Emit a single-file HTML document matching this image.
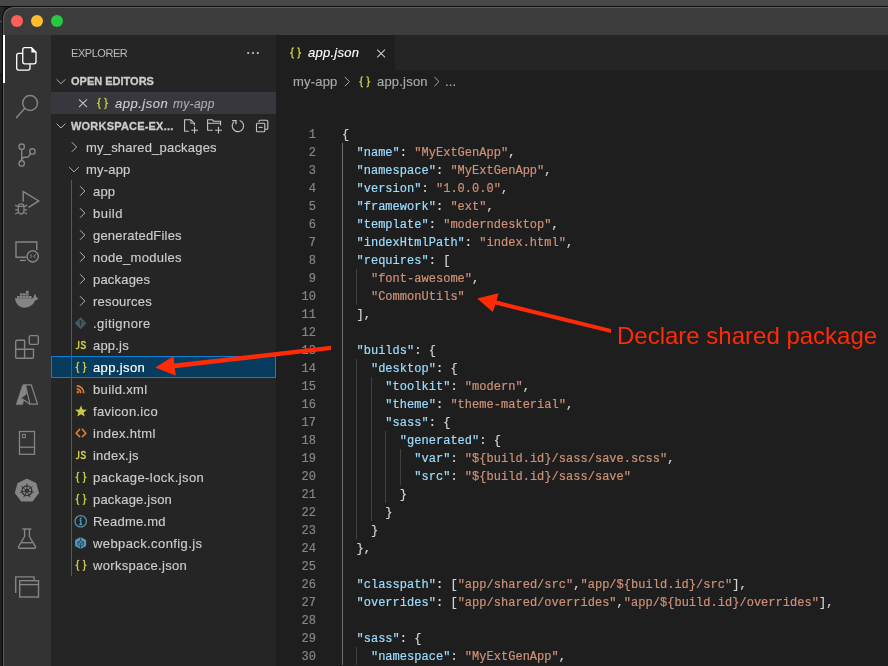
<!DOCTYPE html>
<html><head><meta charset="utf-8"><style>
*{box-sizing:border-box}
html,body{margin:0;padding:0}
body{width:888px;height:666px;overflow:hidden;position:relative;background:#1c1c1c;font-family:"Liberation Sans",sans-serif}
div,span.a,svg{position:absolute}
.t{-webkit-text-stroke:0.15px;white-space:pre;line-height:22px;height:22px;font-size:13px;color:#cccccc;letter-spacing:0.2px}
.hd{-webkit-text-stroke:0.3px;white-space:pre;font-size:11px;font-weight:bold;color:#cccccc;line-height:22px;height:22px}
.cl{-webkit-text-stroke:0.2px;letter-spacing:0.024px;left:342px;font-family:"Liberation Mono",monospace;font-size:12px;line-height:18px;height:18px;white-space:pre;color:#d4d4d4}
.ln{-webkit-text-stroke:0.2px;left:276px;width:40px;text-align:right;font-family:"Liberation Mono",monospace;font-size:12px;line-height:18px;height:18px;color:#858585}
.t,.hd,.cl,.ln{will-change:transform}
.k{color:#9cdcfe}.s{color:#ce9178}
.ig{width:1px;background:#404040}
</style></head><body>
<div style="left:0;top:0;width:888px;height:6px;background:#474747"></div>
<div style="left:0;top:6px;width:888px;height:1px;background:#0d0d0d"></div>
<div style="left:0;top:7px;width:4px;height:67px;background:#262626"></div>
<div style="left:0;top:74px;width:4px;height:1px;background:#0f0f0f"></div>
<div style="left:0;top:75px;width:4px;height:591px;background:#1d1d1d"></div>
<div style="left:0;top:21px;width:3px;height:1px;background:#555"></div>
<div style="left:2px;top:6px;width:886px;height:29px;background:#3c3c3c;border-top-left-radius:11px;border-top:1px solid #0d0d0d;border-left:1px solid #0d0d0d;box-shadow:inset 1px 1px 0 #5c5c5c"></div>
<div style="left:11px;top:15px;width:12px;height:12px;border-radius:50%;background:#fe5f57"></div>
<div style="left:31px;top:15px;width:12px;height:12px;border-radius:50%;background:#febc2e"></div>
<div style="left:51px;top:15px;width:12px;height:12px;border-radius:50%;background:#28c840"></div>
<div style="left:2px;top:35px;width:49px;height:631px;background:#333333;border-left:1px solid #0d0d0d;box-shadow:inset 1px 0 0 #565656"></div>
<div style="left:3px;top:35px;width:2px;height:48px;background:#ffffff"></div>
<div style="left:51px;top:35px;width:225px;height:631px;background:#252526"></div>
<div style="left:276px;top:35px;width:612px;height:35px;background:#252526"></div>
<div style="left:276px;top:35px;width:119px;height:35px;background:#1e1e1e"></div>
<div style="left:276px;top:70px;width:612px;height:596px;background:#1e1e1e"></div>
<div style="will-change:transform;left:71px;top:43px;font-size:11px;color:#bbbbbb;line-height:20px;white-space:pre;letter-spacing:-0.45px">EXPLORER</div>
<div class="hd" style="left:71px;top:70px">OPEN EDITORS</div>
<div style="left:51px;top:92px;width:225px;height:22px;background:#37373d"></div>
<div class="t" style="left:114.5px;top:93px;font-style:italic;letter-spacing:0.5px">app.json</div>
<div class="t" style="left:173px;top:93px;font-style:italic;font-size:12px;color:#a9a9a9;letter-spacing:0.3px">my-app</div>
<div class="hd" style="left:71px;top:115px;letter-spacing:0.2px">WORKSPACE-EX...</div>
<div class="t" style="left:85.6px;top:137px;color:#cccccc;letter-spacing:0.20px">my_shared_packages</div>
<div class="t" style="left:85.6px;top:159px;color:#cccccc;letter-spacing:0.20px">my-app</div>
<div class="t" style="left:93px;top:181px;color:#cccccc;letter-spacing:0.20px">app</div>
<div class="t" style="left:93px;top:203px;color:#cccccc;letter-spacing:0.50px">build</div>
<div class="t" style="left:93px;top:225px;color:#cccccc;letter-spacing:0.20px">generatedFiles</div>
<div class="t" style="left:93px;top:247px;color:#cccccc;letter-spacing:0.29px">node_modules</div>
<div class="t" style="left:93px;top:269px;color:#cccccc;letter-spacing:0.20px">packages</div>
<div class="t" style="left:93px;top:291px;color:#cccccc;letter-spacing:0.20px">resources</div>
<div class="t" style="left:93px;top:313px;color:#cccccc;letter-spacing:0.42px">.gitignore</div>
<div class="t" style="left:93px;top:335px;color:#cccccc;letter-spacing:0.20px">app.js</div>
<div style="left:51px;top:356px;width:225px;height:22px;background:#073c5f;border:1px solid #0a7fd6"></div>
<div class="t" style="left:93px;top:357px;color:#ffffff;letter-spacing:0.38px">app.json</div>
<div class="t" style="left:93px;top:379px;color:#cccccc;letter-spacing:0.36px">build.xml</div>
<div class="t" style="left:93px;top:401px;color:#cccccc;letter-spacing:0.32px">favicon.ico</div>
<div class="t" style="left:93px;top:423px;color:#cccccc;letter-spacing:0.35px">index.html</div>
<div class="t" style="left:93px;top:445px;color:#cccccc;letter-spacing:0.20px">index.js</div>
<div class="t" style="left:93px;top:467px;color:#cccccc;letter-spacing:0.42px">package-lock.json</div>
<div class="t" style="left:93px;top:489px;color:#cccccc;letter-spacing:0.20px">package.json</div>
<div class="t" style="left:93px;top:511px;color:#cccccc;letter-spacing:0.20px">Readme.md</div>
<div class="t" style="left:93px;top:533px;color:#cccccc;letter-spacing:0.40px">webpack.config.js</div>
<div class="t" style="left:93px;top:555px;color:#cccccc;letter-spacing:0.32px">workspace.json</div>
<div class="ig" style="left:71px;top:180px;height:396px;background:#585858"></div>
<svg style="left:0;top:0" width="888" height="666" viewBox="0 0 888 666"><g fill="none" stroke="#ffffff" stroke-width="1.3" stroke-linejoin="round"><path d="M22.75 53.4 H18.7 Q16.7 53.4 16.7 55.4 V68.1 Q16.7 70.1 18.7 70.1 H28 Q30 70.1 30 68.1 V63.8"/><path d="M24.75 47.7 H31.6 L36 52.2 V61.8 Q36 63.8 34 63.8 H24.75 Q22.75 63.8 22.75 61.8 V49.7 Q22.75 47.7 24.75 47.7 Z"/></g><path d="M31.4 47.2 L36.6 52.4 L31.4 52.4 Z" fill="#ffffff"/><g fill="none" stroke="#858585" stroke-width="1.5"><circle cx="30.1" cy="103" r="7.4"/><path d="M24.6 108.4 L16.6 117.6" stroke-linecap="round"/></g><g fill="none" stroke="#858585" stroke-width="1.4"><circle cx="21.7" cy="146.7" r="2.7"/><circle cx="21.7" cy="163.4" r="2.7"/><circle cx="32.4" cy="151.4" r="2.7"/><path d="M21.7 149.4 V160.7"/><path d="M30.6 153.4 Q29 157.2 26.5 157.2 H25 Q21.7 157.2 21.7 160.7"/></g><g fill="none" stroke="#858585" stroke-width="1.4"><path d="M23.2 201.8 V191.6 L38.8 200.9 L28.6 207.3"/><path d="M18.3 206.4 Q18.3 203.8 21.15 203.8 Q24 203.8 24 206.4 V210.3 Q24 214 21.15 214 Q18.3 214 18.3 210.3 Z" stroke-width="1.3"/><path d="M18.3 206.4 H24" stroke-width="1.2"/><path d="M15.2 205.1 L18 206.6 M15.2 209.8 H18 M15.2 214.1 L18 212.5 M27.1 205.1 L24.3 206.6 M27.1 209.8 H24.3 M27.1 214.1 L24.3 212.5" stroke-width="1.2"/></g><g fill="none" stroke="#858585" stroke-width="1.4"><path d="M26.5 257.2 H16 V242 H36.8 V250"/><path d="M20 260.4 H25.8"/><circle cx="32.7" cy="256.4" r="5.6"/><path d="M30 254.6 L32 256.2 L30.2 258 M35.6 254.6 L33.6 256.2 L35.4 258" stroke-width="1"/></g><g fill="#858585"><path d="M14.8 298.3 H33.2 Q34.2 295.5 35 293.8 Q36.6 296 36.2 297.6 Q37.6 297.4 38.3 298 Q37.6 300.2 35.2 300.6 Q32 307.7 24 307.7 Q16.6 307.7 14.8 298.3 Z"/><rect x="17" y="296" width="2.6" height="2"/><rect x="20" y="296" width="2.6" height="2"/><rect x="23" y="296" width="2.6" height="2"/><rect x="26" y="296" width="2.6" height="2"/><rect x="29" y="296" width="2.6" height="2"/><rect x="20" y="293.3" width="2.6" height="2.3"/><rect x="23" y="293.3" width="2.6" height="2.3"/><rect x="26" y="293.3" width="2.6" height="2.3"/><rect x="26" y="290.8" width="2.6" height="2.2"/></g><g fill="none" stroke="#858585" stroke-width="1.4" stroke-linejoin="round"><path d="M16.7 340.3 H24.6 V349.3 H33.5 V356.9 Q33.5 358.2 32.2 358.2 H17 Q15.7 358.2 15.7 356.9 V341.6 Q15.7 340.3 17 340.3 Z"/><path d="M15.7 349.3 H24.6 V358.2"/><rect x="29.3" y="335.6" width="9" height="8.8" rx="1.3"/></g><path d="M16.2 404.6 L22.8 384.8 H25.4 L26.6 394 L21 398.2 L23.6 400.4 L22.6 404.6 Z" fill="#858585" stroke="#858585" stroke-width="0.6" stroke-linejoin="round"/><g fill="none" stroke="#858585" stroke-width="1.2" stroke-linejoin="round"><path d="M25.4 384.8 H31.2 L37.6 404.2 H30 Z"/><path d="M21.6 398.6 L30 404.2"/></g><g fill="none" stroke="#858585" stroke-width="1.3"><rect x="19.5" y="431.5" width="15" height="22.8"/><path d="M19.5 447.2 H34.5"/><rect x="22.4" y="434.4" width="2.9" height="3.3" stroke-width="1"/></g><path d="M26.9 479.3 L35.8 483.6 L38.4 492.8 L32.3 500.9 H21.5 L15.4 492.8 L18 483.6 Z" fill="#858585" stroke="#858585" stroke-width="1.2" stroke-linejoin="round"/><g fill="none" stroke="#333333" stroke-width="1.1"><circle cx="26.9" cy="490.8" r="4.9" stroke-width="1.3"/><circle cx="26.9" cy="490.8" r="1.6"/><path d="M26.9 490.8 L26.90 483.60 M26.9 490.8 L32.53 486.31 M26.9 490.8 L33.92 492.40 M26.9 490.8 L30.02 497.29 M26.9 490.8 L23.78 497.29 M26.9 490.8 L19.88 492.40 M26.9 490.8 L21.27 486.31" stroke-width="1"/></g><g fill="none" stroke="#858585" stroke-width="1.4" stroke-linejoin="round"><path d="M22.3 529 H31.4"/><path d="M24.6 529 V536.5 L18.6 546.6 Q18 548.2 19.8 548.2 H34.2 Q36 548.2 35.4 546.6 L29.4 536.5 V529"/><path d="M21.4 542.7 H32.6"/></g><g fill="none" stroke="#858585" stroke-width="1.4"><path d="M15.7 593 V576.9 H34 V579.9"/><rect x="19.7" y="580.7" width="18.8" height="16.3"/><path d="M19.7 584.6 H38.5"/></g><g fill="#c5c5c5"><circle cx="248.2" cy="53" r="1.1"/><circle cx="253" cy="53" r="1.1"/><circle cx="257.8" cy="53" r="1.1"/></g><g fill="none" stroke="#b4b4b4" stroke-width="1"><path d="M56.6 79.3 L61 83.7 L65.4 79.3"/><path d="M56.6 123.6 L61 128 L65.4 123.6"/><path d="M71.8 142.2 L76.6 147 L71.8 151.8"/><path d="M69.2 167.1 L74 171.9 L78.8 167.1"/><path d="M80 186.2 L84.8 191.0 L80 195.79999999999998"/><path d="M80 208.2 L84.8 213.0 L80 217.79999999999998"/><path d="M80 230.2 L84.8 235.0 L80 239.79999999999998"/><path d="M80 252.2 L84.8 257.0 L80 261.8"/><path d="M80 274.2 L84.8 279.0 L80 283.8"/><path d="M80 296.2 L84.8 301.0 L80 305.8"/></g><path d="M79 99.4 L87 107.2 M87 99.4 L79 107.2" stroke="#c5c5c5" stroke-width="1.1" fill="none"/><g fill="none" stroke="#c5c5c5" stroke-width="1.1"><path d="M188.8 131.2 H184.6 V119.8 H190.8 L194.4 123.4 V125.5"/><path d="M190.8 119.8 V123.4 H194.4" stroke-width="0.8"/><path d="M194.6 126.8 V133.6 M191.2 130.2 H198"/><path d="M212.8 130.2 H207.6 V119.8 H212.4 L213.6 121.2 H220.6 V125.5 M207.6 123.2 H220.6"/><path d="M218.5 126.8 V133.6 M215.1 130.2 H221.9"/><path d="M239.6 120.5 A5.7 5.7 0 1 1 233.9 121.9"/><path d="M232.2 120.6 H236 V124.2" stroke-width="1.3"/><path d="M259 122 V121.3 Q259 120.3 260 120.3 H266.8 Q267.8 120.3 267.8 121.3 V128.2 Q267.8 129.2 266.8 129.2 H265"/><rect x="256.5" y="123.2" width="8.3" height="8.5" rx="1"/><path d="M258.7 127.4 H262.6"/></g><path d="M100.2 98.3 Q99.0 98.3 99.0 99.7 V102.0 Q99.0 103.3 97.5 103.3 Q99.0 103.3 99.0 104.6 V106.89999999999999 Q99.0 108.3 100.2 108.3 M104.8 98.3 Q106.0 98.3 106.0 99.7 V102.0 Q106.0 103.3 107.5 103.3 Q106.0 103.3 106.0 104.6 V106.89999999999999 Q106.0 108.3 104.8 108.3" fill="none" stroke="#cbcb41" stroke-width="1.35" stroke-linecap="round" stroke-linejoin="round"/><path d="M80.6 317.6 L86.1 323.3 L80.6 328.9 L75.1 323.3 Z" fill="#465a63" stroke="#465a63" stroke-width="0.6" stroke-linejoin="round"/><path d="M80.1 320.2 L80.5 325.9 M80.1 320.2 L82.8 323.2" stroke="#252526" stroke-width="0.9" fill="none"/><path d="M78.7 341.6 V346.8 Q78.7 348.4 77.2 348.4 H76.4 M85.2 342.6 Q84.5 341.6 83.3 341.6 Q81.6 341.6 81.6 343.1 Q81.6 344.5 83.4 345 Q85.3 345.5 85.3 346.8 Q85.3 348.4 83.3 348.4 Q81.8 348.4 81.1 347.5" fill="none" stroke="#cbcb41" stroke-width="1.5" stroke-linecap="round"/><path d="M78.7 362.3 Q77.5 362.3 77.5 363.7 V366.0 Q77.5 367.3 76.0 367.3 Q77.5 367.3 77.5 368.6 V370.90000000000003 Q77.5 372.3 78.7 372.3 M83.3 362.3 Q84.5 362.3 84.5 363.7 V366.0 Q84.5 367.3 86.0 367.3 Q84.5 367.3 84.5 368.6 V370.90000000000003 Q84.5 372.3 83.3 372.3" fill="none" stroke="#cbcb41" stroke-width="1.35" stroke-linecap="round" stroke-linejoin="round"/><g fill="none" stroke="#e37933" stroke-width="1.7"><path d="M76.7 385.8 A7 7 0 0 1 83.7 393.2"/><path d="M76.7 388.9 A4 4 0 0 1 80.7 393.2"/></g><rect x="76.7" y="391.1" width="2.2" height="2.1" fill="#e37933"/><path d="M81 405.5 L82.6 409.6 L87 409.8 L83.6 412.6 L84.8 416.5 L81 414.2 L77.2 416.5 L78.4 412.6 L75 409.8 L79.4 409.6 Z" fill="#cbcb41"/><g fill="none" stroke="#e37933" stroke-width="1.6" stroke-linecap="round"><path d="M79.6 429.4 L76.2 433.2 L79.6 436.6 M82.4 429.4 L85.8 433.2 L82.4 436.6"/></g><path d="M78.7 451.6 V456.8 Q78.7 458.4 77.2 458.4 H76.4 M85.2 452.6 Q84.5 451.6 83.3 451.6 Q81.6 451.6 81.6 453.1 Q81.6 454.5 83.4 455 Q85.3 455.5 85.3 456.8 Q85.3 458.4 83.3 458.4 Q81.8 458.4 81.1 457.5" fill="none" stroke="#cbcb41" stroke-width="1.5" stroke-linecap="round"/><path d="M78.7 472.3 Q77.5 472.3 77.5 473.7 V476.0 Q77.5 477.3 76.0 477.3 Q77.5 477.3 77.5 478.6 V480.90000000000003 Q77.5 482.3 78.7 482.3 M83.3 472.3 Q84.5 472.3 84.5 473.7 V476.0 Q84.5 477.3 86.0 477.3 Q84.5 477.3 84.5 478.6 V480.90000000000003 Q84.5 482.3 83.3 482.3" fill="none" stroke="#cbcb41" stroke-width="1.35" stroke-linecap="round" stroke-linejoin="round"/><path d="M78.7 494.3 Q77.5 494.3 77.5 495.7 V498.0 Q77.5 499.3 76.0 499.3 Q77.5 499.3 77.5 500.6 V502.90000000000003 Q77.5 504.3 78.7 504.3 M83.3 494.3 Q84.5 494.3 84.5 495.7 V498.0 Q84.5 499.3 86.0 499.3 Q84.5 499.3 84.5 500.6 V502.90000000000003 Q84.5 504.3 83.3 504.3" fill="none" stroke="#cbcb41" stroke-width="1.35" stroke-linecap="round" stroke-linejoin="round"/><circle cx="80.7" cy="521.3" r="5.7" fill="none" stroke="#519aba" stroke-width="1.2"/><circle cx="80.8" cy="518.4" r="0.9" fill="#519aba"/><path d="M80.8 519.8 V524.5 M79.3 524.5 H82.3 M79.5 520 H80.8" stroke="#519aba" stroke-width="1.3" fill="none"/><path d="M80.6 537 L86.1 540 V546 L80.6 549 L75.1 546 V540 Z" fill="#519aba"/><path d="M80.6 540.6 L83.3 542 V545 L80.6 546.4 L77.9 545 V542 Z M80.6 543.4 V549 M80.6 543.4 L83.3 542 M80.6 543.4 L77.9 542 M80.6 537 V540.6" fill="none" stroke="#1e3a48" stroke-width="0.8"/><path d="M78.7 560.3 Q77.5 560.3 77.5 561.6999999999999 V564.0 Q77.5 565.3 76.0 565.3 Q77.5 565.3 77.5 566.5999999999999 V568.9 Q77.5 570.3 78.7 570.3 M83.3 560.3 Q84.5 560.3 84.5 561.6999999999999 V564.0 Q84.5 565.3 86.0 565.3 Q84.5 565.3 84.5 566.5999999999999 V568.9 Q84.5 570.3 83.3 570.3" fill="none" stroke="#cbcb41" stroke-width="1.35" stroke-linecap="round" stroke-linejoin="round"/><path d="M293.29999999999995 48 Q292.09999999999997 48 292.09999999999997 49.4 V51.7 Q292.09999999999997 53 290.59999999999997 53 Q292.09999999999997 53 292.09999999999997 54.3 V56.6 Q292.09999999999997 58 293.29999999999995 58 M297.9 48 Q299.09999999999997 48 299.09999999999997 49.4 V51.7 Q299.09999999999997 53 300.59999999999997 53 Q299.09999999999997 53 299.09999999999997 54.3 V56.6 Q299.09999999999997 58 297.9 58" fill="none" stroke="#cbcb41" stroke-width="1.35" stroke-linecap="round" stroke-linejoin="round"/><path d="M377.2 49.6 L385 57.4 M385 49.6 L377.2 57.4" stroke="#c5c5c5" stroke-width="1.1" fill="none"/><path d="M362.4 76.8 Q361.2 76.8 361.2 78.2 V80.5 Q361.2 81.8 359.7 81.8 Q361.2 81.8 361.2 83.1 V85.39999999999999 Q361.2 86.8 362.4 86.8 M367.0 76.8 Q368.2 76.8 368.2 78.2 V80.5 Q368.2 81.8 369.7 81.8 Q368.2 81.8 368.2 83.1 V85.39999999999999 Q368.2 86.8 367.0 86.8" fill="none" stroke="#cbcb41" stroke-width="1.35" stroke-linecap="round" stroke-linejoin="round"/><g fill="none" stroke="#a9a9a9" stroke-width="1"><path d="M344.8 77 L349.4 81.6 L344.8 86.2"/><path d="M434.4 77 L439 81.6 L434.4 86.2"/></g><rect x="342" y="143" width="1" height="522" fill="#707070"/><rect x="356" y="269" width="1" height="36" fill="#404040"/><rect x="356" y="359" width="1" height="180" fill="#404040"/><rect x="356" y="647" width="1" height="18" fill="#404040"/><rect x="371" y="377" width="1" height="144" fill="#404040"/><rect x="385" y="431" width="1" height="72" fill="#404040"/><rect x="400" y="449" width="1" height="36" fill="#404040"/></svg>
<div class="t" style="left:308.3px;top:42px;font-style:italic;color:#ffffff;letter-spacing:0.25px">app.json</div>
<div class="t" style="left:292.5px;top:71px;color:#a9a9a9">my-app</div>
<div class="t" style="left:376.5px;top:71px;color:#a9a9a9">app.json</div>
<div class="t" style="left:445px;top:71px;color:#a9a9a9">...</div>
<div style="will-change:transform;left:616.8px;top:324px;font-size:24px;line-height:24px;color:#ff2a06;white-space:pre">Declare shared package</div>
<div class="ln" style="top:126px">1</div>
<div class="cl" style="top:126px">{</div>
<div class="ln" style="top:144px">2</div>
<div class="cl" style="top:144px">  <span class="k">"name"</span>: <span class="s">"MyExtGenApp"</span>,</div>
<div class="ln" style="top:162px">3</div>
<div class="cl" style="top:162px">  <span class="k">"namespace"</span>: <span class="s">"MyExtGenApp"</span>,</div>
<div class="ln" style="top:180px">4</div>
<div class="cl" style="top:180px">  <span class="k">"version"</span>: <span class="s">"1.0.0.0"</span>,</div>
<div class="ln" style="top:198px">5</div>
<div class="cl" style="top:198px">  <span class="k">"framework"</span>: <span class="s">"ext"</span>,</div>
<div class="ln" style="top:216px">6</div>
<div class="cl" style="top:216px">  <span class="k">"template"</span>: <span class="s">"moderndesktop"</span>,</div>
<div class="ln" style="top:234px">7</div>
<div class="cl" style="top:234px">  <span class="k">"indexHtmlPath"</span>: <span class="s">"index.html"</span>,</div>
<div class="ln" style="top:252px">8</div>
<div class="cl" style="top:252px">  <span class="k">"requires"</span>: [</div>
<div class="ln" style="top:270px">9</div>
<div class="cl" style="top:270px">    <span class="s">"font-awesome"</span>,</div>
<div class="ln" style="top:288px">10</div>
<div class="cl" style="top:288px">    <span class="s">"CommonUtils"</span></div>
<div class="ln" style="top:306px">11</div>
<div class="cl" style="top:306px">  ],</div>
<div class="ln" style="top:324px">12</div>
<div class="cl" style="top:324px"></div>
<div class="ln" style="top:342px">13</div>
<div class="cl" style="top:342px">  <span class="k">"builds"</span>: {</div>
<div class="ln" style="top:360px">14</div>
<div class="cl" style="top:360px">    <span class="k">"desktop"</span>: {</div>
<div class="ln" style="top:378px">15</div>
<div class="cl" style="top:378px">      <span class="k">"toolkit"</span>: <span class="s">"modern"</span>,</div>
<div class="ln" style="top:396px">16</div>
<div class="cl" style="top:396px">      <span class="k">"theme"</span>: <span class="s">"theme-material"</span>,</div>
<div class="ln" style="top:414px">17</div>
<div class="cl" style="top:414px">      <span class="k">"sass"</span>: {</div>
<div class="ln" style="top:432px">18</div>
<div class="cl" style="top:432px">        <span class="k">"generated"</span>: {</div>
<div class="ln" style="top:450px">19</div>
<div class="cl" style="top:450px">          <span class="k">"var"</span>: <span class="s">"${build.id}/sass/save.scss"</span>,</div>
<div class="ln" style="top:468px">20</div>
<div class="cl" style="top:468px">          <span class="k">"src"</span>: <span class="s">"${build.id}/sass/save"</span></div>
<div class="ln" style="top:486px">21</div>
<div class="cl" style="top:486px">        }</div>
<div class="ln" style="top:504px">22</div>
<div class="cl" style="top:504px">      }</div>
<div class="ln" style="top:522px">23</div>
<div class="cl" style="top:522px">    }</div>
<div class="ln" style="top:540px">24</div>
<div class="cl" style="top:540px">  },</div>
<div class="ln" style="top:558px">25</div>
<div class="cl" style="top:558px"></div>
<div class="ln" style="top:576px">26</div>
<div class="cl" style="top:576px">  <span class="k">"classpath"</span>: [<span class="s">"app/shared/src"</span>,<span class="s">"app/${build.id}/src"</span>],</div>
<div class="ln" style="top:594px">27</div>
<div class="cl" style="top:594px">  <span class="k">"overrides"</span>: [<span class="s">"app/shared/overrides"</span>,<span class="s">"app/${build.id}/overrides"</span>],</div>
<div class="ln" style="top:612px">28</div>
<div class="cl" style="top:612px"></div>
<div class="ln" style="top:630px">29</div>
<div class="cl" style="top:630px">  <span class="k">"sass"</span>: {</div>
<div class="ln" style="top:648px">30</div>
<div class="cl" style="top:648px">    <span class="k">"namespace"</span>: <span class="s">"MyExtGenApp"</span>,</div>
<svg style="left:0;top:0" width="888" height="666" viewBox="0 0 888 666"><path d="M155.3 367.6 L173.6 356 L174.2 363.5 L331 345.8 L331 349.9 L174.7 368.2 L175.9 375.7 Z" fill="#ff2a06"/><path d="M477.2 298.6 L498.5 293.2 L496.6 300.6 L611 329 L611 333 L495.4 304.6 L492.8 312 Z" fill="#ff2a06"/></svg>
</body></html>
